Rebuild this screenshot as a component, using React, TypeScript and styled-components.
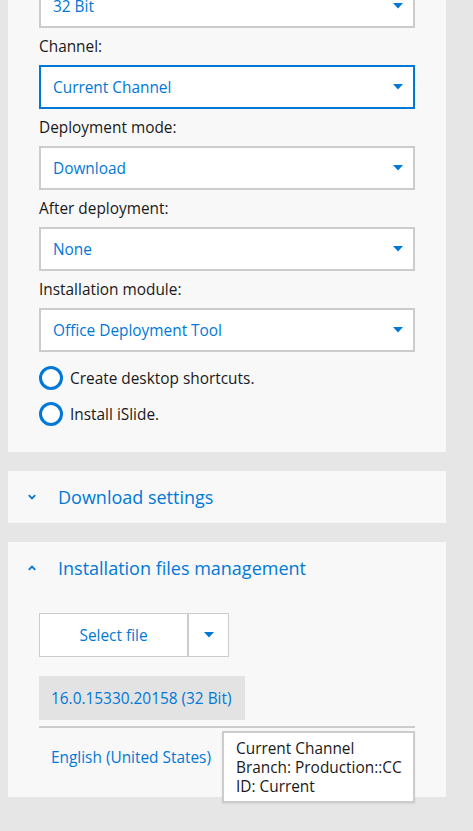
import React from "react";
import styled, { createGlobalStyle } from "styled-components";

const Global = createGlobalStyle`
  html, body { margin: 0; padding: 0; background: #e6e6e6; }
  body { font-family: "Open Sans", "Noto Sans", sans-serif; overflow: hidden; }
  * { box-sizing: border-box; }
`;

const BLUE = "#0078d7";
const FS = "15.4px";

const Page = styled.div`
  display: flex;
  flex-direction: column;
  gap: 19px;
  padding: 0 27px 40px 8px;
  margin-top: -16px;
  width: 473px;
`;

const Panel = styled.section<{ $pb?: number }>`
  background: #f8f8f8;
  padding: 0 31px ${(p) => p.$pb ?? 0}px 31px;
  display: flex;
  flex-direction: column;
`;

const Label = styled.div`
  height: 37px;
  display: flex;
  align-items: center;
  font-size: ${FS};
  color: #1a1a1a;
`;

const Select = styled.div<{ $focus?: boolean }>`
  height: 44px;
  background: #fff;
  border: 2px solid ${(p) => (p.$focus ? BLUE : "#cccccc")};
  display: flex;
  align-items: center;
  justify-content: space-between;
  padding: 0 10px 0 12px;
  color: ${BLUE};
  font-size: ${FS};
`;

const Caret = () => (
  <svg width="10" height="6" viewBox="0 0 10 6">
    <path d="M0 0 H10 L5 5.5 Z" fill={BLUE} />
  </svg>
);

const Radios = styled.div`
  margin-top: 8px;
  display: flex;
  flex-direction: column;
`;

const RadioRow = styled.label`
  height: 36px;
  display: flex;
  align-items: center;
  gap: 7px;
  font-size: ${FS};
  color: #1a1a1a;
`;

const Ring = styled.span`
  width: 24px;
  height: 24px;
  border-radius: 50%;
  border: 3px solid ${BLUE};
  background: #fff;
  flex: none;
`;

const Header = styled.div`
  height: 52px;
  display: flex;
  align-items: center;
  margin-left: -11px;
  gap: 22px;
  color: ${BLUE};
  font-size: 18px;
`;

const Chevron = ({ up }: { up?: boolean }) => (
  <svg width="8" height="6" viewBox="0 0 8 6">
    <path
      d={up ? "M0.8 4.8 L4 1.6 L7.2 4.8" : "M0.8 1.2 L4 4.4 L7.2 1.2"}
      fill="none"
      stroke={BLUE}
      strokeWidth="1.8"
    />
  </svg>
);

const SplitButton = styled.div`
  margin-top: 19px;
  display: flex;
  width: 190px;
  height: 44px;
  background: #fff;
  border: 1px solid #cccccc;
`;

const MainButton = styled.div`
  width: 149px;
  display: flex;
  align-items: center;
  justify-content: center;
  color: ${BLUE};
  font-size: ${FS};
  border-right: 2px solid #cccccc;
`;

const ArrowButton = styled.div`
  flex: 1;
  display: flex;
  align-items: center;
  justify-content: center;
`;

const Version = styled.div`
  margin-top: 19px;
  align-self: flex-start;
  width: 206px;
  height: 44px;
  background: #e3e3e3;
  display: flex;
  align-items: center;
  padding: 0 12px;
  color: ${BLUE};
  font-size: ${FS};
  white-space: nowrap;
`;

const Divider = styled.div`
  margin-top: 6px;
  height: 2px;
  background: #cccccc;
`;

const LangRow = styled.div`
  position: relative;
  height: 58px;
  display: flex;
  align-items: center;
  padding-left: 12px;
  color: ${BLUE};
  font-size: ${FS};
`;

const Tooltip = styled.div`
  position: absolute;
  left: 183px;
  top: 3px;
  width: 193px;
  height: 72px;
  background: #fff;
  border: 2px solid #cccccc;
  box-shadow: 0 1px 2px rgba(0, 0, 0, 0.08);
  padding: 6px 12px;
  color: #1a1a1a;
  font-size: ${FS};
  line-height: 19px;
  white-space: nowrap;
  z-index: 2;
`;

const fields: { label?: string; value: string; focus?: boolean }[] = [
  { value: "32 Bit" },
  { label: "Channel:", value: "Current Channel", focus: true },
  { label: "Deployment mode:", value: "Download" },
  { label: "After deployment:", value: "None" },
  { label: "Installation module:", value: "Office Deployment Tool" },
];

export default function App() {
  return (
    <>
      <Global />
      <Page>
        <Panel $pb={20}>
          {fields.map((f) => (
            <React.Fragment key={f.value}>
              {f.label && <Label>{f.label}</Label>}
              <Select $focus={f.focus}>
                <span>{f.value}</span>
                <Caret />
              </Select>
            </React.Fragment>
          ))}
          <Radios>
            <RadioRow>
              <Ring />
              Create desktop shortcuts.
            </RadioRow>
            <RadioRow>
              <Ring />
              Install iSlide.
            </RadioRow>
          </Radios>
        </Panel>
        <Panel>
          <Header>
            <Chevron />
            Download settings
          </Header>
        </Panel>
        <Panel $pb={11}>
          <Header>
            <Chevron up />
            Installation files management
          </Header>
          <SplitButton>
            <MainButton>Select file</MainButton>
            <ArrowButton>
              <Caret />
            </ArrowButton>
          </SplitButton>
          <Version>16.0.15330.20158 (32 Bit)</Version>
          <Divider />
          <LangRow>
            English (United States)
            <Tooltip>
              Current Channel
              <br />
              Branch: Production::CC
              <br />
              ID: Current
            </Tooltip>
          </LangRow>
        </Panel>
      </Page>
    </>
  );
}
